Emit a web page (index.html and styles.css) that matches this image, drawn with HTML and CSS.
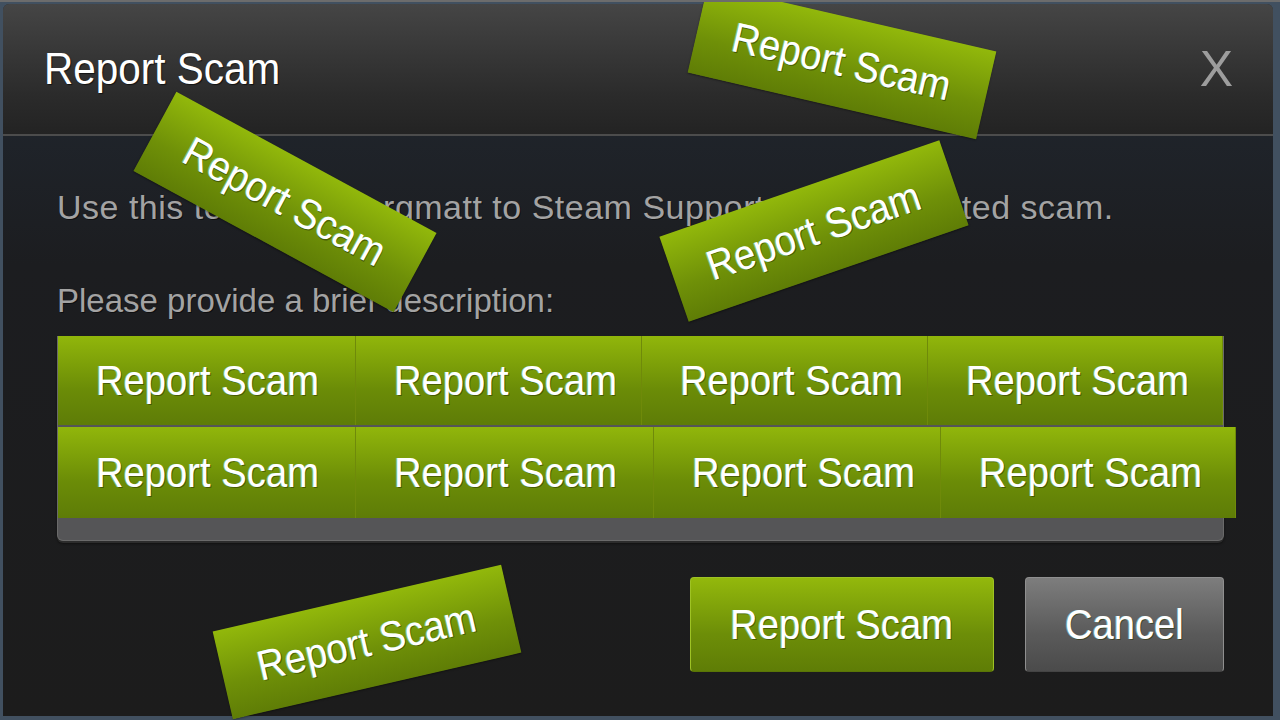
FILE: index.html
```html
<!DOCTYPE html>
<html lang="en">

<head>
    <meta charset="UTF-8">
    <meta name="viewport" content="width=device-width, initial-scale=1.0">
    <title>Report Scam</title>
    <link rel="stylesheet" href="styles.css">
</head>

<body>
    <div class="dialog">
        <div class="dialog-head">
            <span class="dialog-title"><span class="sq">Report Scam</span></span>
            <span class="dialog-close">X</span>
        </div>
        <div class="dialog-body">
            <p class="intro">Use this to report Morgmatt to Steam Support as a suspected scam.</p>
            <p class="label">Please provide a brief description:</p>

            <!-- 文本框，上面铺满了按钮 -->
            <div class="textarea">
                <div class="row row-a">
                    <span class="cell"><span class="sq">Report Scam</span></span>
                    <span class="cell"><span class="sq">Report Scam</span></span>
                    <span class="cell"><span class="sq">Report Scam</span></span>
                    <span class="cell"><span class="sq">Report Scam</span></span>
                </div>
                <div class="row row-b">
                    <span class="cell"><span class="sq">Report Scam</span></span>
                    <span class="cell"><span class="sq">Report Scam</span></span>
                    <span class="cell"><span class="sq">Report Scam</span></span>
                    <span class="cell"><span class="sq">Report Scam</span></span>
                </div>
            </div>

            <div class="actions">
                <button class="btn btn-green"><span class="sq">Report Scam</span></button>
                <button class="btn btn-gray"><span class="sq">Cancel</span></button>
            </div>
        </div>
    </div>

    <!-- 斜着贴上去的标签 -->
    <span class="sticker s1"><span class="sq">Report Scam</span></span>
    <span class="sticker s2"><span class="sq">Report Scam</span></span>
    <span class="sticker s3"><span class="sq">Report Scam</span></span>
    <span class="sticker s4"><span class="sq">Report Scam</span></span>
</body>

</html>
```

FILE: styles.css
```css
html,
body {
    margin: 0;
    height: 100%;
}

body {
    position: relative;
    overflow: hidden;
    box-sizing: border-box;
    padding: 2px 7px 4px 3px;
    background-color: #415060;
    border-top: 2px solid #6c6c6c;
    font-family: "Liberation Sans", Arial, sans-serif;
}

/* 原图文字是横向压扁的 */
.sq {
    display: inline-block;
    transform: scaleX(0.91);
    transform-origin: left center;
}

.dialog {
    height: 100%;
    display: flex;
    flex-direction: column;
    border-radius: 6px 6px 0 0;
    overflow: hidden;
    background: linear-gradient(#222a34, #1c1d20 260px, #1c1c1c);
}

.dialog-head {
    height: 130px;
    flex-shrink: 0;
    display: flex;
    align-items: center;
    justify-content: space-between;
    padding: 0 40px 0 41px;
    background: linear-gradient(#454545, #2b2b2b 70%, #232323);
    border-bottom: 2px solid #4c4c4c;
}

.dialog-title {
    font-size: 44px;
    color: #fff;
    text-shadow: 1px 1px 1px rgba(0, 0, 0, 0.6);
}

.dialog-title .sq {
    transform: scaleX(0.92);
}

.dialog-close {
    font-size: 50px;
    color: #9d9d9d;
}

.dialog-body {
    flex: 1;
    padding: 0 49px 0 54px;
}

.intro,
.label {
    margin: 0;
    font-size: 33px;
    color: #a3a3a3;
    text-shadow: 1px 1px 0 rgba(0, 0, 0, 0.5);
}

.intro {
    margin-top: 52px;
    font-size: 34px;
    letter-spacing: 0.5px;
}

.label {
    margin-top: 55px;
}

.textarea {
    margin-top: 16px;
    height: 204px;
    display: flex;
    flex-direction: column;
    gap: 2px;
    background: #555557;
    border-radius: 0 0 6px 6px;
    border: 1px solid #6a6a6a;
    border-top: 0;
    box-shadow: 0 2px 0 #2c2c2c, 0 3px 2px #121212;
}

.row {
    display: grid;
    height: 89px;
}

.row-a {
    grid-template-columns: 298px 286px 286px 1fr;
}

.row-b {
    height: 91px;
    margin-right: -13px;
    grid-template-columns: 298px 298px 287px 1fr;
}

.cell,
.btn,
.sticker {
    font-family: "Liberation Sans", Arial, sans-serif;
    font-size: 42px;
    color: #fff;
    text-shadow: -1px 0 0 rgba(140, 255, 255, 0.45), 1px 1px 0 rgba(40, 50, 0, 0.55);
}

.cell {
    display: flex;
    align-items: center;
    padding-left: 38px;
    background: linear-gradient(#91b60b, #6b8c07 60%, #5e7c07);
    border-right: 1px solid #6f8a0a;
}

.actions {
    display: flex;
    justify-content: flex-end;
    gap: 31px;
    margin-top: 36px;
}

.btn {
    height: 95px;
    border-radius: 4px;
    padding: 0;
    cursor: pointer;
}

.btn .sq,
.sticker .sq {
    transform-origin: center;
}

.btn-green {
    width: 304px;
    border: 1px solid #9ec224;
    border-bottom-color: #5a7506;
    background: linear-gradient(#93b80c, #6d8e08 60%, #5f7d06);
}

.btn-gray {
    width: 199px;
    border: 1px solid #8f8f8f;
    border-bottom-color: #444;
    background: linear-gradient(#7d7d7d, #5a5a5a 60%, #4b4b4b);
}

.sticker {
    position: absolute;
    width: 296px;
    height: 90px;
    display: flex;
    align-items: center;
    justify-content: center;
    background: linear-gradient(#92b80b, #6f9008 60%, #5f7d06);
    box-shadow: 0 1px 2px rgba(0, 0, 0, 0.4);
}

.s1 {
    left: 694px;
    top: 15px;
    transform: rotate(13deg);
}

.s2 {
    left: 137px;
    top: 155px;
    transform: rotate(28.5deg);
}

.s3 {
    left: 666px;
    top: 184px;
    transform: rotate(-19deg);
}

.s4 {
    left: 219px;
    top: 595px;
    transform: rotate(-13deg);
}
```
